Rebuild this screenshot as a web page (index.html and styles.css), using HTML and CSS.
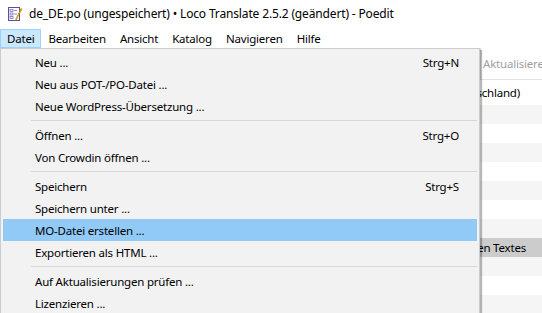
FILE: index.html
```html
<!DOCTYPE html>
<html lang="de">
<head>
<meta charset="utf-8">
<link rel="stylesheet" href="styles.css">
</head>
<body>
<div class="window">
  <div class="titlebar">
    <svg class="app-icon" width="16" height="16" viewBox="0 0 16 16">
      <rect x="1.5" y="1.5" width="11" height="13" fill="#fff" stroke="#5b4f9e" stroke-width="1"/>
      <rect x="3" y="3.5" width="3" height="2" fill="none" stroke="#7b6fc0" stroke-width="0.8"/>
      <line x1="7" y1="4.5" x2="10" y2="4.5" stroke="#7b6fc0" stroke-width="0.8"/>
      <rect x="3" y="7" width="3" height="2" fill="none" stroke="#7b6fc0" stroke-width="0.8"/>
      <line x1="7" y1="8" x2="10" y2="8" stroke="#7b6fc0" stroke-width="0.8"/>
      <rect x="3" y="10.5" width="3" height="2" fill="none" stroke="#7b6fc0" stroke-width="0.8"/>
      <path d="M15 3 L9.5 13.5 L8.5 14.5 L8.8 13 L14 2.5 Z" fill="#f2b01e" stroke="#b07a10" stroke-width="0.6"/>
    </svg>
    <span class="title">de_DE.po (ungespeichert) • Loco Translate 2.5.2 (geändert) - Poedit</span>
  </div>
  <div class="menubar">
    <span class="mb-item active">Datei</span>
    <span class="mb-item">Bearbeiten</span>
    <span class="mb-item">Ansicht</span>
    <span class="mb-item">Katalog</span>
    <span class="mb-item">Navigieren</span>
    <span class="mb-item">Hilfe</span>
  </div>
  <div class="content">
    <div class="toolbar">
      <div class="tb-group">
        <span class="tb-label">Aktualisieren</span>
      </div>
    </div>
    <div class="list">
      <div class="row lang">Deutsch (Deutschland)</div>
      <div class="row gray"></div>
      <div class="row white"></div>
      <div class="row gray"></div>
      <div class="row white"></div>
      <div class="row gray"></div>
      <div class="row white"></div>
      <div class="row gray"></div>
      <div class="row selected">Übersetzung des markierten Textes</div>
      <div class="row gray"></div>
      <div class="row white"></div>
      <div class="row gray"></div>
    </div>
  </div>

  <div class="dropdown">
    <div class="item"><span class="label">Neu ...</span><span class="key">Strg+N</span></div>
    <div class="item"><span class="label">Neu aus POT-/PO-Datei ...</span></div>
    <div class="item"><span class="label">Neue WordPress-Übersetzung ...</span></div>
    <div class="sep"></div>
    <div class="item"><span class="label">Öffnen ...</span><span class="key">Strg+O</span></div>
    <div class="item"><span class="label">Von Crowdin öffnen ...</span></div>
    <div class="sep"></div>
    <div class="item"><span class="label">Speichern</span><span class="key">Strg+S</span></div>
    <div class="item"><span class="label">Speichern unter ...</span></div>
    <div class="item hover"><span class="label">MO-Datei erstellen ...</span></div>
    <div class="item"><span class="label">Exportieren als HTML ...</span></div>
    <div class="sep"></div>
    <div class="item"><span class="label">Auf Aktualisierungen prüfen ...</span></div>
    <div class="item"><span class="label">Lizenzieren ...</span></div>
  </div>
</div>
</body>
</html>
```
FILE: styles.css
```css
html, body {
  margin: 0;
  padding: 0;
  background: #ffffff;
}
body {
  width: 542px;
  height: 313px;
  overflow: hidden;
  font-family: "Noto Sans", "Open Sans", sans-serif;
  font-size: 11.5px;
  letter-spacing: -0.2px;
  color: #000;
}
.window {
  position: relative;
  width: 542px;
  height: 313px;
  overflow: hidden;
}
.titlebar {
  height: 29px;
  display: flex;
  align-items: center;
  padding-left: 7px;
  gap: 6px;
  box-sizing: border-box;
  padding-bottom: 2px;
}
.app-icon {
  flex: none;
}
.title {
  font-size: 12px;
  letter-spacing: -0.15px;
  white-space: nowrap;
}
.menubar {
  height: 19px;
  display: flex;
  align-items: stretch;
}
.mb-item {
  display: flex;
  align-items: center;
  padding: 0 6px;
  border: 1px solid transparent;
  box-sizing: border-box;
}
.mb-item.active {
  background: #cce8ff;
  border-color: #99d1ff;
}
.toolbar {
  height: 31px;
  border-bottom: 1px solid #e3e3e3;
  display: flex;
  justify-content: flex-end;
  white-space: nowrap;
  overflow: hidden;
}
.tb-group {
  width: 59px;
  flex: none;
  display: flex;
  align-items: center;
  border-left: 1px solid #e0e0e0;
  padding-left: 2px;
  margin: 0 0 0 0;
}
.tb-label {
  color: #a0a0a0;
}
.list {
  display: flex;
  flex-direction: column;
}
.row {
  height: 19px;
  line-height: 19px;
  white-space: nowrap;
  text-align: right;
  padding-right: 16px;
}
.row.lang {
  height: 25px;
  line-height: 25px;
  padding-right: 22px;
  background: #ffffff;
}
.row.white { background: #ffffff; }
.row.gray { background: #f5f5f5; }
.row.selected { background: #cccccc; }

.dropdown {
  position: absolute;
  left: 0;
  top: 48px;
  width: 480px;
  box-sizing: border-box;
  border: 1px solid #cccccc;
  background: #f2f2f2;
  padding: 2px;
  box-shadow: 2px 2px 1px rgba(0, 0, 0, 0.28);
}
.item {
  height: 22px;
  display: flex;
  align-items: center;
  justify-content: space-between;
  padding: 0 18px 0 32px;
  white-space: nowrap;
}
.item.hover {
  background: #91c9f7;
}
.sep {
  height: 7px;
  display: flex;
  align-items: center;
  padding-left: 28px;
}
.sep::before {
  content: "";
  flex: 1;
  height: 1px;
  background: #d7d7d7;
}
```
